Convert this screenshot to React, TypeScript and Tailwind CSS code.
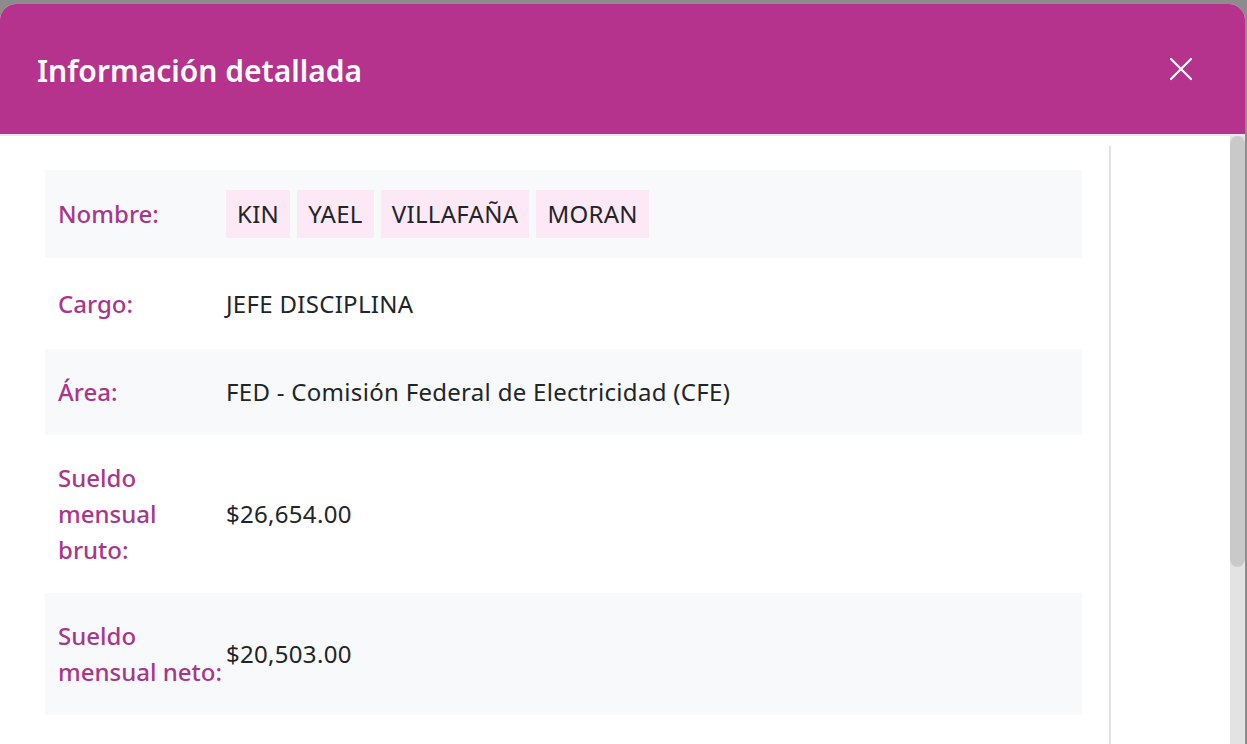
import React from 'react';

const NAME_PARTS = ['KIN', 'YAEL', 'VILLAFAÑA', 'MORAN'];

const ROWS: { label: string; value: string; shaded: boolean; pad: string }[] = [
  { label: 'Cargo:', value: 'JEFE DISCIPLINA', shaded: false, pad: 'pt-[28px] pb-[27px]' },
  { label: 'Área:', value: 'FED - Comisión Federal de Electricidad (CFE)', shaded: true, pad: 'py-[25px]' },
  { label: 'Sueldo mensual bruto:', value: '$26,654.00', shaded: false, pad: 'py-[25px]' },
  { label: 'Sueldo mensual neto:', value: '$20,503.00', shaded: true, pad: 'py-[25px]' },
];

const font = { fontFamily: '"Noto Sans", "Open Sans", sans-serif' };

export default function App() {
  return (
    <div className="h-[744px] w-[1247px] overflow-hidden bg-[#8c8c8c] pt-[4px] pr-[2px]" style={font}>
      <div className="flex h-full flex-col overflow-hidden rounded-t-[16px] bg-white">
        {/* header */}
        <div className="flex h-[132px] shrink-0 items-center justify-between border-b-2 border-[#ece6ea] bg-[#b5338c] pl-[37px] pr-[52px]">
          <h1 className="mt-[4px] text-[30px] font-semibold leading-none text-white">Información detallada</h1>
          <button className="text-white" aria-label="Cerrar">
            <svg width="24" height="24" viewBox="0 0 24 24" fill="none" stroke="currentColor" strokeWidth="2.2" strokeLinecap="round">
              <path d="M2 2 L22 22 M22 2 L2 22" />
            </svg>
          </button>
        </div>

        {/* body */}
        <div className="flex min-h-0 flex-1">
          <div className="flex-1 pt-[10px]">
            <div className="h-full w-[1111px] border-r-2 border-[#e2e2e2] pt-[24px] pl-[45px] pr-[27px]">
              <table className="w-full border-collapse text-[24px] leading-[36px] text-[#212529]">
                <tbody>
                  <tr className="bg-[#f8f9fa]">
                    <th className="w-[181px] py-[20px] pl-[13px] text-left font-medium text-[#a8378c]">Nombre:</th>
                    <td className="py-[20px]">
                      <div className="flex gap-[7px] tracking-[0.3px]">
                        {NAME_PARTS.map(p => (
                          <span key={p} className="bg-[#fde8f6] px-[11px] py-[6px]">{p}</span>
                        ))}
                      </div>
                    </td>
                  </tr>
                  {ROWS.map(r => (
                    <tr key={r.label} className={r.shaded ? 'bg-[#f8f9fa]' : 'bg-white'}>
                      <th className={`w-[181px] pl-[13px] pr-[4px] text-left font-medium text-[#a8378c] ${r.pad}`}>{r.label}</th>
                      <td className={`tracking-[0.3px] ${r.pad}`}>{r.value}</td>
                    </tr>
                  ))}
                </tbody>
              </table>
            </div>
          </div>
          {/* scrollbar */}
          <div className="w-[15px] shrink-0 bg-[#e3e3e3]">
            <div className="h-[431px] rounded-full bg-[#c9c9c9]" />
          </div>
        </div>
      </div>
    </div>
  );
}
